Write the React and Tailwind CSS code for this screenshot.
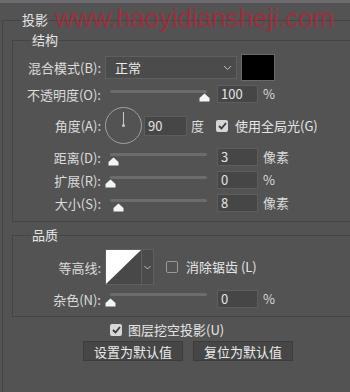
import React from 'react';

// --- Small pieces ---

function Thumb({ pos }) {
  return (
    <svg className={`absolute ${pos}`} width="11" height="9" viewBox="0 0 11 9">
      <path d="M5.5 0.5 L10.5 5 L10.5 8.5 L0.5 8.5 L0.5 5 Z" fill="#f4f4f4" />
    </svg>
  );
}

function Slider({ pos, track = 'top-[5px]' }) {
  return (
    <div className="relative w-[97px] h-[18px] ml-[9px] shrink-0">
      <div className={`absolute left-0 right-0 ${track} h-[3px] bg-[#6c6c6c] rounded-full`}></div>
      <Thumb pos={pos} />
    </div>
  );
}

function NumBox({ value, w = 'w-[41px]', h = 'h-[18px]' }) {
  return (
    <div className={`${w} ${h} bg-[#464646] border border-[#5d5d5d] flex items-center px-[3px] text-[13px] text-[#e4e4e4] shrink-0`}>
      {value}
    </div>
  );
}

function Label({ children }) {
  return <div className="w-[88px] shrink-0 text-right text-[13px] leading-none text-[#dcdcdc]">{children}</div>;
}

function Check({ checked }) {
  return (
    <div className={`w-[12px] h-[12px] shrink-0 rounded-[2px] flex items-center justify-center ${checked ? 'bg-[#d6d6d6]' : 'border border-[#9a9a9a]'}`}>
      {checked && (
        <svg width="9" height="8" viewBox="0 0 9 8">
          <path d="M1 4 L3.5 6.5 L8 1" stroke="#3a3a3a" strokeWidth="1.8" fill="none" />
        </svg>
      )}
    </div>
  );
}

function Legend({ children }) {
  return (
    <div className="-mt-[9px] ml-[18px] w-fit px-[1px] h-[16px] bg-[#535353] text-[13px] leading-[16px] text-[#e6e6e6]">
      {children}
    </div>
  );
}

function SliderRow({ label, value, unit, pos, mt }) {
  return (
    <div className={`flex items-center h-[18px] ${mt}`}>
      <Label>{label}</Label>
      <Slider pos={pos} />
      <div className="ml-[10px]"><NumBox value={value} /></div>
      <div className="ml-[5px] text-[13px] text-[#dcdcdc]">{unit}</div>
    </div>
  );
}

// --- Main ---

export default function App() {
  return (
    <div className="w-[350px] h-[392px] bg-[#535353] relative overflow-hidden font-['Noto_Sans_CJK_SC','Noto_Sans',sans-serif]">
      <div className="h-[3px] bg-[#6b6b70]"></div>

      {/* 投影 */}
      <div className="mt-[17px] ml-[2px] border-t border-l border-[#444444] h-[400px] w-[400px]">
        <Legend>投影</Legend>

        {/* 结构 */}
        <div className="mt-[12px] ml-[9px] border-t border-l border-b border-[#444444] pb-[9px]">
          <Legend>结构</Legend>

          <div className="flex items-center h-[27px] mt-[6px]">
            <Label>混合模式(B):</Label>
            <div className="ml-[4px] w-[132px] h-[23px] bg-[#4b4b4b] border border-[#5f5f5f] flex items-center justify-between pl-[9px] pr-[4px] text-[13px] text-[#ececec]">
              <span>正常</span>
              <svg width="9" height="6" viewBox="0 0 9 6">
                <path d="M1 1 L4.5 4.5 L8 1" stroke="#bdbdbd" strokeWidth="1" fill="none" />
              </svg>
            </div>
            <div className="ml-[4px] w-[34px] h-[27px] bg-black border border-[#6a6a6a]"></div>
          </div>

          <div className="flex items-center h-[18px] mt-[4px]">
            <Label>不透明度(O):</Label>
            <Slider pos="left-[89px] top-[8px]" />
            <div className="ml-[10px]"><NumBox value="100" /></div>
            <div className="ml-[5px] text-[13px] text-[#dcdcdc]">%</div>
          </div>

          <div className="flex items-center h-[37px] mt-[4px]">
            <Label>角度(A):</Label>
            <div className="ml-[4px] w-[37px] h-[37px] rounded-full border border-[#a2a2a2] relative shrink-0">
              <div className="absolute left-[17px] top-[4px] w-[1px] h-[14px] bg-[#c8c8c8]"></div>
              <div className="absolute left-[16px] top-[16px] w-[3px] h-[3px] rounded-full bg-[#c8c8c8]"></div>
            </div>
            <div className="ml-[2px]"><NumBox value="90" w="w-[43px]" h="h-[20px]" /></div>
            <div className="ml-[4px] text-[13px] text-[#dcdcdc]">度</div>
            <div className="ml-[12px]"><Check checked /></div>
            <div className="ml-[7px] text-[13px] text-[#e6e6e6]">使用全局光(G)</div>
          </div>

          <SliderRow label="距离(D):" value="3" unit="像素" pos="left-[-2px] top-[9px]" mt="mt-[4px]" />
          <SliderRow label="扩展(R):" value="0" unit="%" pos="left-[-5px] top-[8px]" mt="mt-[5px]" />
          <SliderRow label="大小(S):" value="8" unit="像素" pos="left-[3px] top-[9px]" mt="mt-[5px]" />
        </div>

        {/* 品质 */}
        <div className="mt-[13px] ml-[9px] border-t border-l border-b border-[#444444] pb-[8px]">
          <Legend>品质</Legend>

          <div className="flex items-center h-[36px] mt-[6px]">
            <Label>等高线:</Label>
            <div className="ml-[4px] flex h-[36px] border border-[#5f5f5f]">
              <svg width="35" height="34" viewBox="0 0 35 34" className="block">
                <rect width="35" height="34" fill="#484848" />
                <path d="M0 0 L35 0 L0 34 Z" fill="#ffffff" />
              </svg>
              <div className="w-[12px] bg-[#4b4b4b] border-l border-[#5f5f5f] flex items-center justify-center">
                <svg width="7" height="5" viewBox="0 0 7 5">
                  <path d="M0.5 1 L3.5 4 L6.5 1" stroke="#bdbdbd" strokeWidth="1" fill="none" />
                </svg>
              </div>
            </div>
            <div className="ml-[12px]"><Check /></div>
            <div className="ml-[8px] text-[13px] text-[#e6e6e6]">消除锯齿 (L)</div>
          </div>

          <div className="flex items-center h-[18px] mt-[5px]">
            <Label>杂色(N):</Label>
            <Slider pos="left-[-5px] top-[8px]" track="top-[3px]" />
            <div className="ml-[10px]"><NumBox value="0" /></div>
            <div className="ml-[5px] text-[13px] text-[#dcdcdc]">%</div>
          </div>
        </div>

        <div className="flex items-center h-[14px] mt-[6px] ml-[107px]">
          <Check checked />
          <div className="ml-[6px] text-[13px] text-[#e6e6e6]">图层挖空投影(U)</div>
        </div>

        <div className="flex gap-[10px] mt-[4px] ml-[80px]">
          <button className="w-[100px] h-[20px] bg-[#464646] border border-[#3c3c3c] text-[13px] leading-none text-[#ececec]">设置为默认值</button>
          <button className="w-[100px] h-[20px] bg-[#464646] border border-[#3c3c3c] text-[13px] leading-none text-[#ececec]">复位为默认值</button>
        </div>
      </div>

      {/* watermark */}
      <div className="absolute top-[5px] left-[55px] text-[26px] leading-none tracking-[-0.2px] text-[#9c2f3c] font-['Liberation_Sans',sans-serif] pointer-events-none">
        www.haoyidiansheji.com
      </div>
    </div>
  );
}
